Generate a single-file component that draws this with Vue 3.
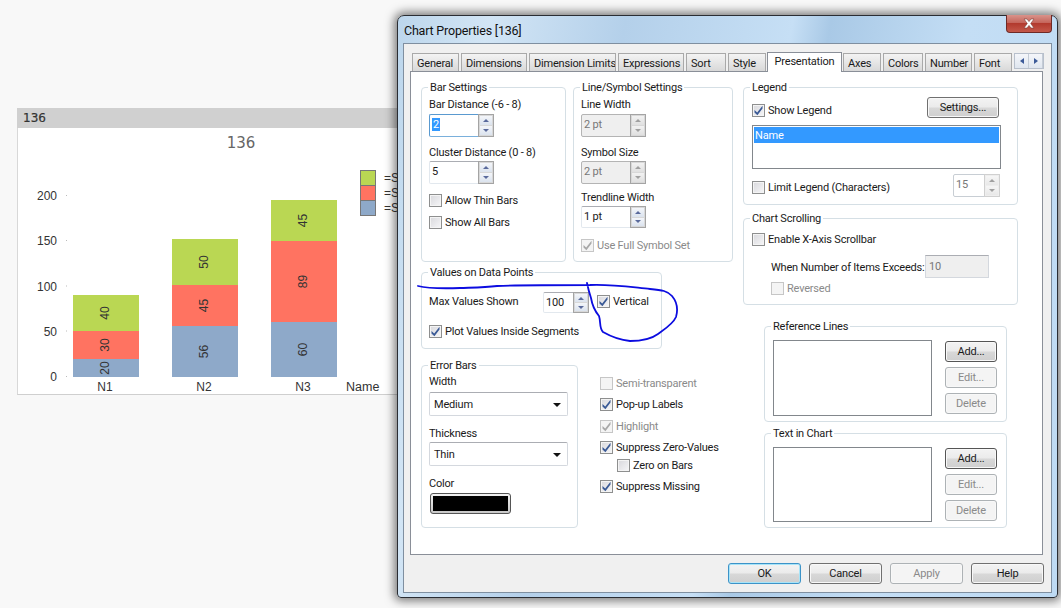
<script setup>
const tabs = [
  { t: 'General', w: 47 }, { t: 'Dimensions', w: 66 }, { t: 'Dimension Limits', w: 87 },
  { t: 'Expressions', w: 66 }, { t: 'Sort', w: 40 }, { t: 'Style', w: 38 },
  { t: 'Presentation', w: 75, on: true }, { t: 'Axes', w: 38 }, { t: 'Colors', w: 40 },
  { t: 'Number', w: 47 }, { t: 'Font', w: 38 }
]
const bars = [
  { x: 73, label: 'N1', segs: [[359, 18, '#8ea9c9', '20'], [331, 28, '#ff7361', '30'], [295, 36, '#bad753', '40']] },
  { x: 172, label: 'N2', segs: [[326, 51, '#8ea9c9', '56'], [285, 41, '#ff7361', '45'], [239, 46, '#bad753', '50']] },
  { x: 271, label: 'N3', segs: [[322, 55, '#8ea9c9', '60'], [241, 81, '#ff7361', '89'], [200, 41, '#bad753', '45']] }
]
const yAxis = [[200, 196], [150, 241], [100, 286.5], [50, 331.5], [0, 377]]
const legendRows = [[170, '#bad753'], [185, '#ff7361'], [200, '#8ea9c9']]
</script>

<template>
  <div class="desk">
    <svg class="defs" width="0" height="0">
      <symbol id="tick" viewBox="0 0 11 11">
        <path d="M1.500 5 L4.200 7.400 L9.500 .8 L9.500 3.400 L4.400 10.200 L1.500 7.400 Z" fill="currentColor" />
      </symbol>
    </svg>

    <section class="card">
      <header class="card-head">136</header>
      <svg class="plot" width="380" height="267" viewBox="17 128 380 267">
        <text x="241" y="148" class="title" text-anchor="middle">136</text>
        <g v-for="a in yAxis" :key="a[0]">
          <text x="57" :y="a[1] + 4" class="axis" text-anchor="end">{{ a[0] }}</text>
          <rect x="66" :y="a[1] - 1" width="1" height="1" fill="#bbb" />
        </g>
        <g v-for="b in bars" :key="b.label">
          <g v-for="s in b.segs" :key="s[3]">
            <rect :x="b.x" :y="s[0]" width="66" :height="s[1]" :fill="s[2]" />
            <text class="val" text-anchor="middle"
              :transform="`translate(${b.x + 32} ${s[0] + s[1] / 2}) rotate(-90)`">{{ s[3] }}</text>
          </g>
          <text :x="b.x + 32" y="391" class="axis" text-anchor="middle">{{ b.label }}</text>
        </g>
        <text x="346" y="391" class="axis name">Name</text>
        <g v-for="l in legendRows" :key="l[0]">
          <rect x="360.5" :y="l[0] + 0.5" width="15" height="15" :fill="l[1]" stroke="#777" />
          <text x="384" :y="l[0] + 12" class="axis">=S</text>
        </g>
      </svg>
    </section>

    <div class="win">
      <div class="titlebar">
        <span class="wintitle">Chart Properties [136]</span>
        <span class="close">
          <svg width="14" height="11" viewBox="0 0 14 11"><path d="M2 1 H5 L7 3.6 L9 1 H12 L8.7 5.5 L12 10 H9 L7 7.4 L5 10 H2 L5.3 5.5 Z" fill="#fff" stroke="#7a3a34" stroke-width=".6" /></svg>
        </span>
      </div>

      <div class="client">
        <div class="tabs">
          <span v-for="t in tabs" :key="t.t" class="tab" :class="{ active: t.on }" :style="{ width: t.w + 'px' }">{{ t.t }}</span>
          <span class="tabarrows"><i class="ta l"></i><i class="ta r"></i></span>
        </div>

        <div class="panel">
          <div class="left">
            <div class="row-top">
              <fieldset class="group bar">
                <span class="cap">Bar Settings</span>
                <div class="lbl">Bar Distance (-6 - 8)</div>
                <div class="spin sp1 focus"><span class="v"><b class="sel">2</b></span><span class="arr"><i class="up"></i><i class="dn"></i></span></div>
                <div class="lbl m8">Cluster Distance (0 - 8)</div>
                <div class="spin sp2"><span class="v">5</span><span class="arr"><i class="up"></i><i class="dn"></i></span></div>
                <div class="chk m9"><i class="box"></i>Allow Thin Bars</div>
                <div class="chk m8"><i class="box"></i>Show All Bars</div>
              </fieldset>
              <fieldset class="group line">
                <span class="cap">Line/Symbol Settings</span>
                <div class="lbl">Line Width</div>
                <div class="spin sp1 dis"><span class="v">2 pt</span><span class="arr"><i class="up"></i><i class="dn"></i></span></div>
                <div class="lbl m8">Symbol Size</div>
                <div class="spin sp2 dis"><span class="v">2 pt</span><span class="arr"><i class="up"></i><i class="dn"></i></span></div>
                <div class="lbl m6">Trendline Width</div>
                <div class="spin sp3"><span class="v">1 pt</span><span class="arr"><i class="up"></i><i class="dn"></i></span></div>
                <div class="chk dis m10"><i class="box"><svg class="tk"><use href="#tick" /></svg></i>Use Full Symbol Set</div>
              </fieldset>
            </div>

            <fieldset class="group values">
              <span class="cap">Values on Data Points</span>
              <div class="maxrow">
                <span class="maxlbl">Max Values Shown</span>
                <div class="spin sp4"><span class="v">100</span><span class="arr"><i class="up"></i><i class="dn"></i></span></div>
                <div class="chk vert"><i class="box"><svg class="tk"><use href="#tick" /></svg></i>Vertical</div>
              </div>
              <div class="chk m11"><i class="box"><svg class="tk"><use href="#tick" /></svg></i>Plot Values Inside Segments</div>
            </fieldset>

            <div class="row-bottom">
              <fieldset class="group errs">
                <span class="cap">Error Bars</span>
                <div class="lbl">Width</div>
                <div class="select m4">Medium<i class="caret"></i></div>
                <div class="lbl m10">Thickness</div>
                <div class="select m2">Thin<i class="caret"></i></div>
                <div class="lbl m10">Color</div>
                <div class="swatch"><i></i></div>
              </fieldset>
              <div class="checks">
                <div class="chk dis"><i class="box"></i>Semi-transparent</div>
                <div class="chk m7"><i class="box"><svg class="tk"><use href="#tick" /></svg></i>Pop-up Labels</div>
                <div class="chk dis m8"><i class="box"><svg class="tk"><use href="#tick" /></svg></i>Highlight</div>
                <div class="chk m7"><i class="box"><svg class="tk"><use href="#tick" /></svg></i>Suppress Zero-Values</div>
                <div class="chk m4 indent"><i class="box"></i>Zero on Bars</div>
                <div class="chk m7"><i class="box"><svg class="tk"><use href="#tick" /></svg></i>Suppress Missing</div>
              </div>
            </div>
          </div>

          <div class="right">
            <fieldset class="group legend">
              <span class="cap">Legend</span>
              <div class="legtop">
                <div class="chk low"><i class="box"><svg class="tk"><use href="#tick" /></svg></i>Show Legend</div>
                <span class="btn settings">Settings...</span>
              </div>
              <div class="list leglist"><div class="selrow">Name</div></div>
              <div class="legbot">
                <div class="chk low"><i class="box"></i>Limit Legend (Characters)</div>
                <div class="spin sp5 disabled-light"><span class="v">15</span><span class="arr"><i class="up"></i><i class="dn"></i></span></div>
              </div>
            </fieldset>

            <fieldset class="group scroll">
              <span class="cap">Chart Scrolling</span>
              <div class="chk"><i class="box"></i>Enable X-Axis Scrollbar</div>
              <div class="whenrow">
                <span class="whenlbl">When Number of Items Exceeds:</span>
                <span class="numbox">10</span>
              </div>
              <div class="chk dis rev"><i class="box"></i>Reversed</div>
            </fieldset>

            <fieldset class="group refs">
              <span class="cap">Reference Lines</span>
              <div class="list reflist"></div>
              <div class="btncol">
                <span class="btn strong">Add...</span>
                <span class="btn off">Edit...</span>
                <span class="btn off">Delete</span>
              </div>
            </fieldset>

            <fieldset class="group texts">
              <span class="cap">Text in Chart</span>
              <div class="list txtlist"></div>
              <div class="btncol">
                <span class="btn strong">Add...</span>
                <span class="btn off">Edit...</span>
                <span class="btn off">Delete</span>
              </div>
            </fieldset>
          </div>
        </div>

        <div class="footer">
          <span class="btn act primary">OK</span>
          <span class="btn act">Cancel</span>
          <span class="btn act off">Apply</span>
          <span class="btn act">Help</span>
        </div>
      </div>
    </div>

    <svg class="ink" width="1061" height="608" viewBox="0 0 1061 608">
      <path d="M418 286 C430 289 445 288.500 460 288 C475 287.500 485 287.500 497 286 C520 285 560 285 590 285 C610 284 630 287 650 289 C662 290 668 291 672 296 C677 302 678 310 676 317 C673 324 665 329 658 334 C650 340 640 341 630 341 C620 340 610 336 603 332 C599 328 601 322 599 316 C594 310 592 304 591 298 C589 292 588 288 587 283" fill="none" stroke="#0c0ce0" stroke-width="1.800" stroke-linecap="round" />
    </svg>
  </div>
</template>

<style>
html, body { margin: 0; background: #f8f8f8; }
</style>

<style scoped>
.desk { position: relative; width: 1061px; height: 608px; overflow: hidden; background: #f8f8f8; font-family: Roboto, "Liberation Sans", sans-serif; font-size: 11px; letter-spacing: -.2px; color: #1a1a1a; }
.defs { position: absolute; }

.card { position: absolute; left: 17px; top: 108px; width: 400px; height: 287px; background: #fff; border-bottom: 1px solid #cfcfcf; border-left: 1px solid #d8d8d8; box-sizing: border-box; letter-spacing: 0; }
.card-head { height: 20px; margin-left: -1px; background: #d0d0d0; font: 12px/20px "DejaVu Sans", sans-serif; color: #333; padding-left: 6px; -webkit-text-stroke: .2px #333; }
.plot { display: block; margin-left: -1px; }
.title { font: 15px "DejaVu Sans", sans-serif; fill: #666; }
.axis { font: 12px "Liberation Sans", sans-serif; fill: #333; }
.name { font-size: 12.500px; }
.val { font: 12px "Liberation Sans", sans-serif; fill: #333; dominant-baseline: central; }

.win { position: absolute; left: 397px; top: 15px; width: 661px; height: 583px; box-sizing: border-box; padding: 0 5px 5px; border: 1px solid #2a2d33; border-radius: 7px 7px 4px 4px; background: linear-gradient(100deg, #bcd6ec 0%, #d2e5f5 12%, #b4d0ea 30%, #c6dff5 52%, #a9c9e6 57%, #c4def5 75%, #bedaf3 100%); box-shadow: 0 0 10px 3px rgba(0,0,0,.5); }
.titlebar { position: relative; height: 27px; display: flex; align-items: center; padding-left: 1px; }
.wintitle { font-size: 12.500px; color: #111; padding-top: 1px; }
.close { position: absolute; right: 0; top: -1px; width: 46px; height: 18px; box-sizing: border-box; border: 1px solid #6e2a26; border-top: none; border-radius: 0 0 4px 4px; background: linear-gradient(#d9928a 0, #c5665c 45%, #b23a2e 50%, #c4584a 100%); display: flex; align-items: center; justify-content: center; }

.client { width: 649px; height: 550px; box-sizing: border-box; border: 1px solid #7f8fa0; background: #f0f0f0; display: flex; flex-direction: column; }
.tabs { height: 18px; margin-top: 9px; padding-left: 8px; display: flex; gap: 2px; align-items: flex-end; }
.tab { box-sizing: border-box; height: 18px; border: 1px solid #a9a9a9; border-bottom: none; background: linear-gradient(#f3f3f3, #e6e6e6 50%, #d8d8d8); padding-left: 4px; line-height: 19px; white-space: nowrap; overflow: hidden; position: relative; }
.tab.active { height: 20px; margin: 0 -1px; padding-left: 0; text-align: center; background: #fff; border-color: #8a8f98; z-index: 2; margin-bottom: -1px; line-height: 18px; }
.tabarrows { display: flex; align-self: flex-start; margin-left: 0; border: 1px solid #b8c0cc; height: 14px; background: #eee; }
.ta { width: 14px; height: 14px; display: flex; align-items: center; justify-content: center; border-right: 1px solid #c4ccd6; box-sizing: border-box; background: linear-gradient(#f4f6fa, #dfe6ef); }
.ta.l::before { content: ""; border: 3px solid transparent; border-right: 4px solid #3c5a98; border-left: none; }
.ta.r::before { content: ""; border: 3px solid transparent; border-left: 4px solid #3c5a98; border-right: none; }

.panel { box-sizing: border-box; margin-left: 6px; width: 633px; height: 484px; background: #fff; border: 1px solid #8a8f98; padding: 15px 0 0 10px; display: flex; gap: 10px; }
.left { width: 312px; }
.right { width: 275px; }
.row-top { display: flex; gap: 7px; }
.row-bottom { display: flex; margin-top: 16px; }

.group { position: relative; margin: 0; min-width: 0; box-sizing: border-box; border: 1px solid #d5dfe5; border-radius: 4px; padding: 9px 0 0 7px; }
.cap { position: absolute; left: 6px; top: -7px; background: #fff; padding: 0 2px; line-height: 13px; white-space: nowrap; }
.bar { width: 145px; height: 175px; }
.line { width: 160px; height: 175px; }
.values { width: 241px; height: 77px; margin-top: 10px; padding-top: 19px; }
.errs { width: 157px; height: 163px; padding-top: 8px; }
.legend { height: 118px; padding-left: 8px; }
.scroll { height: 87px; margin-top: 13px; padding: 13px 0 0 8px; }
.refs { width: 243px; height: 96px; margin: 21px 0 0 21px; padding: 13px 0 0 8px; display: flex; align-items: flex-start; }
.texts { width: 243px; height: 95px; margin: 11px 0 0 21px; padding: 13px 0 0 8px; display: flex; align-items: flex-start; }

.lbl { height: 14px; line-height: 16px; white-space: nowrap; }
.m2 { margin-top: 2px; } .m4 { margin-top: 4px; } .m6 { margin-top: 6px; } .m7 { margin-top: 7px; }
.m8 { margin-top: 8px; } .m9 { margin-top: 9px; } .m10 { margin-top: 10px; } .m11 { margin-top: 11px; }

.spin { box-sizing: border-box; display: flex; width: 65px; border: 1px solid #e2e8ee; border-top-color: #abadb3; border-radius: 2px; background: #fff; position: relative; }
.sp1 { height: 23px; margin-top: 3px; }
.sp2 { height: 23px; margin-top: 2px; }
.sp3 { height: 22px; margin-top: 2px; }
.sp4 { height: 21px; width: 46px; }
.sp5 { height: 23px; width: 47px; }
.focus { border-color: #5a9ad0 #c4dcf0 #7ab0dc #5a9ad0; }
.v { flex: 1; padding: 2px 0 0 2px; line-height: 15px; }
.sel { font-weight: 400; background: #3399ff; color: #fff; padding: 0 1px; }
.arr { width: 16px; margin: -1px -1px -1px 0; box-sizing: border-box; border: 1px solid #a4a4a4; background: #d8d8d8; display: flex; flex-direction: column; gap: 1px; padding: 1px; }
.arr i { flex: 1; background: linear-gradient(#f4f6fa, #dbe3ee); display: flex; align-items: center; justify-content: center; }
.up::before { content: ""; border: 3px solid transparent; border-bottom: 3px solid #5a6a9c; border-top: none; }
.dn::before { content: ""; border: 3px solid transparent; border-top: 3px solid #5a6a9c; border-bottom: none; }
.dis.spin { background: #efefef; color: #777; border-color: #b4b4b4; }
.dis .arr i { background: linear-gradient(#f2f2f2, #e0e0e0); }
.dis .up::before { border-bottom-color: #a0a0a0; }
.dis .dn::before { border-top-color: #a0a0a0; }
.disabled-light { color: #777; border: 1px solid #c8ced4; }
.disabled-light .arr { border-color: #d0d0d0; background: #eee; }
.disabled-light .arr i { background: linear-gradient(#f6f6f6, #e8e8e8); }
.disabled-light .up::before { border-bottom-color: #a0a0a0; }
.disabled-light .dn::before { border-top-color: #a0a0a0; }

.chk { height: 14px; line-height: 16px; display: flex; align-items: flex-start; gap: 3px; white-space: nowrap; }
.box { flex: none; margin-top: 1px; box-sizing: border-box; width: 13px; height: 13px; border: 1px solid #8e8f8f; background: linear-gradient(135deg, #d8d8dc, #f6f6f8); box-shadow: inset 0 0 0 1px #f4f4f4; color: #3a5a96; display: flex; align-items: center; justify-content: center; }
.tk { width: 11px; height: 11px; }
.chk.dis { color: #8a8a8a; }
.chk.dis .box { border-color: #c6c6c6; background: #f4f4f4; color: #a8a8a8; box-shadow: none; }

.maxrow { display: flex; align-items: center; }
.maxlbl { width: 114px; white-space: nowrap; line-height: 16px; margin-bottom: 1px; }
.vert { margin: 0 0 3px 8px; }
.select { box-sizing: border-box; width: 139px; height: 24px; border: 1px solid #d4d8de; border-top-color: #abadb3; border-radius: 2px; padding-left: 4px; line-height: 24px; position: relative; }
.caret { position: absolute; right: 6px; top: 10px; border: 4px solid transparent; border-top: 4px solid #111; border-bottom: none; }
.swatch { box-sizing: border-box; margin: 3px 0 0 1px; width: 81px; height: 21px; border: 1px solid #555; border-radius: 3px; padding: 2px; background: linear-gradient(#f2f2f2, #c8c8c8); }
.swatch i { display: block; height: 100%; background: #000; }

.checks { margin: 11px 0 0 22px; }
.indent { margin-left: 17px; }

.btn { box-sizing: border-box; display: flex; align-items: center; justify-content: center; height: 21px; border: 1px solid #707070; border-radius: 3px; background: linear-gradient(#f3f3f3, #ebebeb 48%, #d8d8d8 52%, #cfcfcf); box-shadow: inset 0 0 0 1px #f8f8f8; white-space: nowrap; }
.btn.off { color: #8a8a8a; border-color: #adb2b5; background: #f4f4f4; }
.btn.strong { border-color: #555; }
.btncol { margin: 1px 0 0 13px; display: flex; flex-direction: column; gap: 5px; width: 52px; }

.legtop { display: flex; justify-content: space-between; width: 247px; }
.low { position: relative; top: 6px; }
.settings { width: 72px; }
.list { box-sizing: border-box; background: #fff; border: 1px solid #82878c; }
.leglist { width: 249px; height: 44px; margin-top: 7px; padding: 1px; }
.selrow { background: #3399ff; color: #fff; height: 16px; line-height: 18px; padding-left: 1px; }
.legbot { display: flex; justify-content: space-between; margin-top: 5px; width: 248px; }
.reflist { width: 159px; height: 76px; }
.txtlist { width: 159px; height: 75px; }
.whenrow { display: flex; align-items: center; margin: 9px 0 0 19px; }
.whenlbl { width: 154px; white-space: nowrap; padding-top: 2px; }
.numbox { box-sizing: border-box; width: 64px; height: 23px; background: #efefef; color: #777; border: 1px solid #d4d8de; border-top-color: #abadb3; padding: 4px 0 0 3px; }
.rev { margin: 3px 0 0 19px; }

.footer { flex: 1; display: flex; justify-content: flex-end; gap: 8px; padding: 8px 7px 0 0; }
.act { width: 73px; }
.primary { border-color: #3c93c8; box-shadow: inset 0 0 0 1px #a8e4f8; }

.ink { position: absolute; left: 0; top: 0; pointer-events: none; }
</style>
